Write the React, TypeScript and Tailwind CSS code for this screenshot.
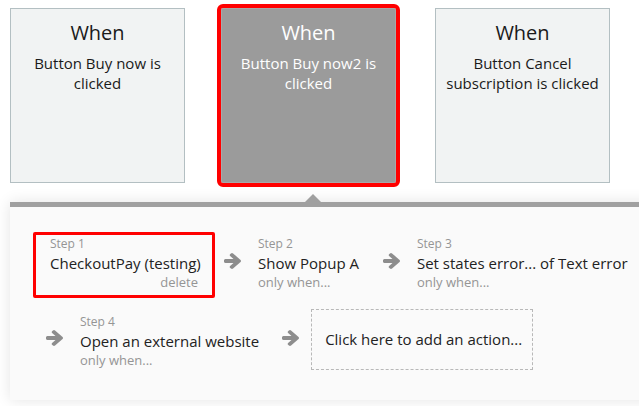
import React from "react";

interface WhenCardProps {
  body: string;
  selected?: boolean;
  className?: string;
}

function WhenCard({ body, selected, className = "" }: WhenCardProps) {
  return (
    <div
      className={`w-[175px] h-[175px] shrink-0 border px-2 pt-[10px] text-center ${
        selected
          ? "bg-[#9b9b9b] border-[#a8a8a8] text-white outline-4 outline-[#ff0000] rounded-[2px]"
          : "bg-[#f1f3f3] border-[#b3bfc2] text-[#1a1a1a]"
      } ${className}`}
    >
      <div className="text-[20px] leading-[28px]">When</div>
      <div className="mt-[6px] text-[15px] leading-[20px]">{body}</div>
    </div>
  );
}

function Arrow({ className = "" }: { className?: string }) {
  return (
    <svg
      viewBox="128 181 1472 1558"
      width="17"
      height="16"
      preserveAspectRatio="none"
      className={`shrink-0 ${className}`}
    >
      <path
        fill="#8d8d8d"
        d="M1600 960q0 54-37 91l-651 651q-39 37-91 37-51 0-90-37l-75-75q-38-38-38-91t38-91l293-293h-704q-52 0-84.5-37.5t-32.5-90.5v-128q0-53 32.5-90.5t84.5-37.5h704l-293-294q-38-36-38-90t38-90l75-75q38-38 90-38 53 0 91 38l651 651q37 35 37 90z"
      />
    </svg>
  );
}

interface StepProps {
  n: number;
  title: string;
  selected?: boolean;
}

function Step({ n, title, selected }: StepProps) {
  return (
    <div
      className={`shrink-0 border-[3px] px-[14px] pb-[4px] rounded-[2px] ${
        selected ? "border-[#ff0000] w-[182px]" : "border-transparent"
      }`}
    >
      <div className="text-[12px] leading-[18px] text-[#959595]">Step {n}</div>
      <div className="text-[15px] leading-[20px] text-[#222] whitespace-nowrap">{title}</div>
      {selected ? (
        <div className="text-[13px] leading-[18px] text-[#959595] text-right">delete</div>
      ) : (
        <div className="text-[13px] leading-[18px] text-[#959595]">only when...</div>
      )}
    </div>
  );
}

export default function App() {
  return (
    <div className="w-[639px] h-[406px] bg-white overflow-hidden font-['Open_Sans',sans-serif]">
      <div className="flex pl-[10px] pt-[8px]">
        <WhenCard body="Button Buy now is clicked" />
        <WhenCard body="Button Buy now2 is clicked" selected className="ml-[36px]" />
        <WhenCard body="Button Cancel subscription is clicked" className="ml-[39px]" />
      </div>

      <div className="relative ml-[10px] mt-[19px] w-[660px] h-[198px] bg-[#fafafa] border-t-[5px] border-[#a0a0a0] shadow-[0_0_14px_rgba(0,0,0,0.11)]">
        <div className="absolute left-[295px] top-[-13px] w-0 h-0 border-l-[8px] border-r-[8px] border-b-[8px] border-l-transparent border-r-transparent border-b-[#a0a0a0]" />

        <div className="pl-[23px] pt-[25px]">
          <div className="flex items-start">
            <Step n={1} title="CheckoutPay (testing)" selected />
            <Arrow className="ml-[9px] mt-[21px]" />
            <Step n={2} title="Show Popup A" />
            <Arrow className="ml-[7px] mt-[21px]" />
            <Step n={3} title="Set states error... of Text error" />
          </div>

          <div className="flex items-start mt-[12px] pl-[13px]">
            <Arrow className="mt-[20px]" />
            <Step n={4} title="Open an external website" />
            <Arrow className="ml-[6px] mt-[20px]" />
            <div className="ml-[12px] -mt-[1px] w-[222px] h-[61px] border border-dashed border-[#b8b8b8] pl-[13px] flex items-center text-[15px] text-[#222]">
              Click here to add an action...
            </div>
          </div>
        </div>
      </div>
    </div>
  );
}
